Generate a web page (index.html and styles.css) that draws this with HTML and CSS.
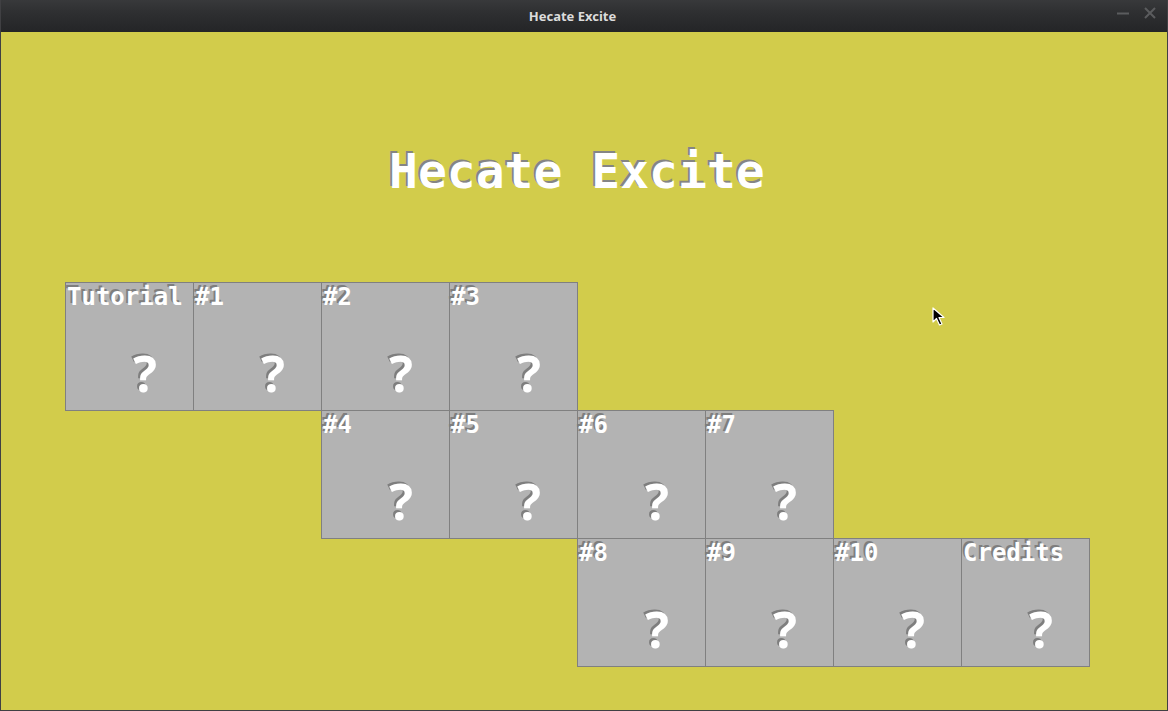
FILE: index.html
```html
<!DOCTYPE html>
<html>
<head>
<meta charset="utf-8">
<link rel="stylesheet" href="styles.css">
</head>
<body>
<div class="window">
  <div class="titlebar">
    <span class="wtitle">Hecate Excite</span>
    <div class="wbtns">
      <svg class="wbtn" width="14" height="14" viewBox="0 0 14 14"><path d="M1 7.5H13" stroke="#5b5c5e" stroke-width="2"/></svg>
      <svg class="wbtn" width="14" height="14" viewBox="0 0 14 14"><path d="M2 2L12 12M12 2L2 12" stroke="#5b5c5e" stroke-width="2"/></svg>
    </div>
  </div>
  <div class="content">
    <h1 class="title">Hecate Excite</h1>
    <div class="levels">
      <div class="tile r1 c1"><div class="label">Tutorial</div><div class="q">?</div></div>
      <div class="tile r1 c2"><div class="label">#1</div><div class="q">?</div></div>
      <div class="tile r1 c3"><div class="label">#2</div><div class="q">?</div></div>
      <div class="tile r1 c4"><div class="label">#3</div><div class="q">?</div></div>
      <div class="tile r2 c3"><div class="label">#4</div><div class="q">?</div></div>
      <div class="tile r2 c4"><div class="label">#5</div><div class="q">?</div></div>
      <div class="tile r2 c5"><div class="label">#6</div><div class="q">?</div></div>
      <div class="tile r2 c6"><div class="label">#7</div><div class="q">?</div></div>
      <div class="tile r3 c5"><div class="label">#8</div><div class="q">?</div></div>
      <div class="tile r3 c6"><div class="label">#9</div><div class="q">?</div></div>
      <div class="tile r3 c7"><div class="label">#10</div><div class="q">?</div></div>
      <div class="tile r3 c8"><div class="label">Credits</div><div class="q">?</div></div>
    </div>
    <svg class="cursor" width="14" height="20" viewBox="0 0 14 20"><path d="M1 1L1 15L4.5 11.5L7.5 18L10 17L7 10.5L12 10.5Z" fill="#000" stroke="#fff" stroke-width="1.2" stroke-linejoin="round"/></svg>
  </div>
</div>
</body>
</html>
```
FILE: styles.css
```css
html, body {
  margin: 0;
  padding: 0;
  background: #3a3a3c;
}
.window {
  width: 1168px;
  height: 711px;
  box-sizing: border-box;
  border: 1px solid #404043;
  border-top: none;
  display: flex;
  flex-direction: column;
  overflow: hidden;
}
.titlebar {
  height: 32px;
  flex: 0 0 32px;
  background: linear-gradient(#38393b, #2e2f31 40%, #242527);
  position: relative;
  display: flex;
  align-items: center;
  justify-content: center;
}
.wtitle {
  font-family: "Noto Sans", "Open Sans", sans-serif;
  font-weight: bold;
  font-size: 13px;
  color: #dcdcdc;
  margin-left: -23px;
}
.wbtns {
  position: absolute;
  right: 10px;
  top: 6px;
  display: flex;
  gap: 13px;
}
.content {
  flex: 1;
  background: #d2cc4b;
  position: relative;
}
.title {
  margin: 0;
  padding: 111px 0 0 388px;
  font-family: "DejaVu Sans Mono", monospace;
  font-weight: bold;
  font-size: 48px;
  line-height: 56px;
  color: #ffffff;
  text-shadow: -2px -2px 0 #858585;
}
.levels {
  margin: 83px 0 0 64px;
  display: grid;
  grid-template-columns: repeat(8, 128px);
  grid-template-rows: repeat(3, 128px);
}
.tile {
  width: 129px;
  height: 129px;
  box-sizing: border-box;
  border: 1px solid #808080;
  background: #b3b3b3;
}
.r1 { grid-row: 1; }
.r2 { grid-row: 2; }
.r3 { grid-row: 3; }
.c1 { grid-column: 1; }
.c2 { grid-column: 2; }
.c3 { grid-column: 3; }
.c4 { grid-column: 4; }
.c5 { grid-column: 5; }
.c6 { grid-column: 6; }
.c7 { grid-column: 7; }
.c8 { grid-column: 8; }
.label {
  font-family: "DejaVu Sans Mono", monospace;
  font-weight: bold;
  font-size: 24px;
  line-height: 28px;
  height: 28px;
  padding-left: 1px;
  color: #ffffff;
  text-shadow: -2px -2px 0 #7e7e7e;
  white-space: nowrap;
}
.q {
  margin-top: 33px;
  padding-left: 67px;
  font-family: "Noto Sans", sans-serif;
  font-weight: bold;
  font-size: 50px;
  line-height: 58px;
  color: #ffffff;
  text-shadow: -2px -2px 0 #7e7e7e;
}
.cursor {
  position: absolute;
  left: 931px;
  top: 275px;
}
```
